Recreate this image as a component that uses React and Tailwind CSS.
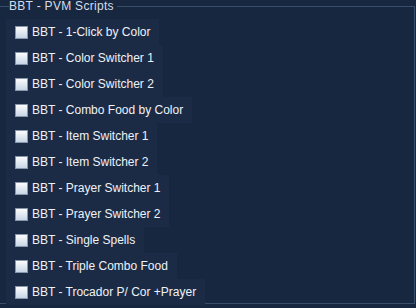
import { useState } from "react";

const scripts = [
  "BBT - 1-Click by Color",
  "BBT - Color Switcher 1",
  "BBT - Color Switcher 2",
  "BBT - Combo Food by Color",
  "BBT - Item Switcher 1",
  "BBT - Item Switcher 2",
  "BBT - Prayer Switcher 1",
  "BBT - Prayer Switcher 2",
  "BBT - Single Spells",
  "BBT - Triple Combo Food",
  "BBT - Trocador P/ Cor +Prayer",
];

const ScriptRow = ({ label, checked, onToggle }) => (
  <label className="flex h-[26px] w-fit items-center gap-[4px] bg-[#1c2b45] pl-[9px] pr-[9px] cursor-default">
    <span
      onClick={onToggle}
      className="flex h-[13px] w-[13px] items-center justify-center border border-[#8796aa] bg-gradient-to-b from-[#fbfcfd] to-[#c9d6e6]"
    >
      {checked && <span className="text-[10px] leading-none text-[#1a2a44]">✓</span>}
    </span>
    <span className="text-[12px] leading-none text-[#eef2f7]">{label}</span>
  </label>
);

export default function App() {
  const [checked, setChecked] = useState({});

  return (
    <div className="h-[308px] w-[416px] overflow-hidden bg-[#172740] font-['Liberation_Sans',Arial,sans-serif]">
      <fieldset className="ml-0 mr-[1px] h-[304px] border border-l-0 border-[#394e6a] pl-[6px] pt-0">
        <legend className="ml-[3px] pr-[3px] text-[12px] leading-[13px] tracking-[0.3px] text-[#d5dde8]">BBT - PVM Scripts</legend>
        <div className="mt-[6px] flex flex-col">
          {scripts.map((s) => (
            <ScriptRow
              key={s}
              label={s}
              checked={!!checked[s]}
              onToggle={() => setChecked((c) => ({ ...c, [s]: !c[s] }))}
            />
          ))}
        </div>
      </fieldset>
    </div>
  );
}
